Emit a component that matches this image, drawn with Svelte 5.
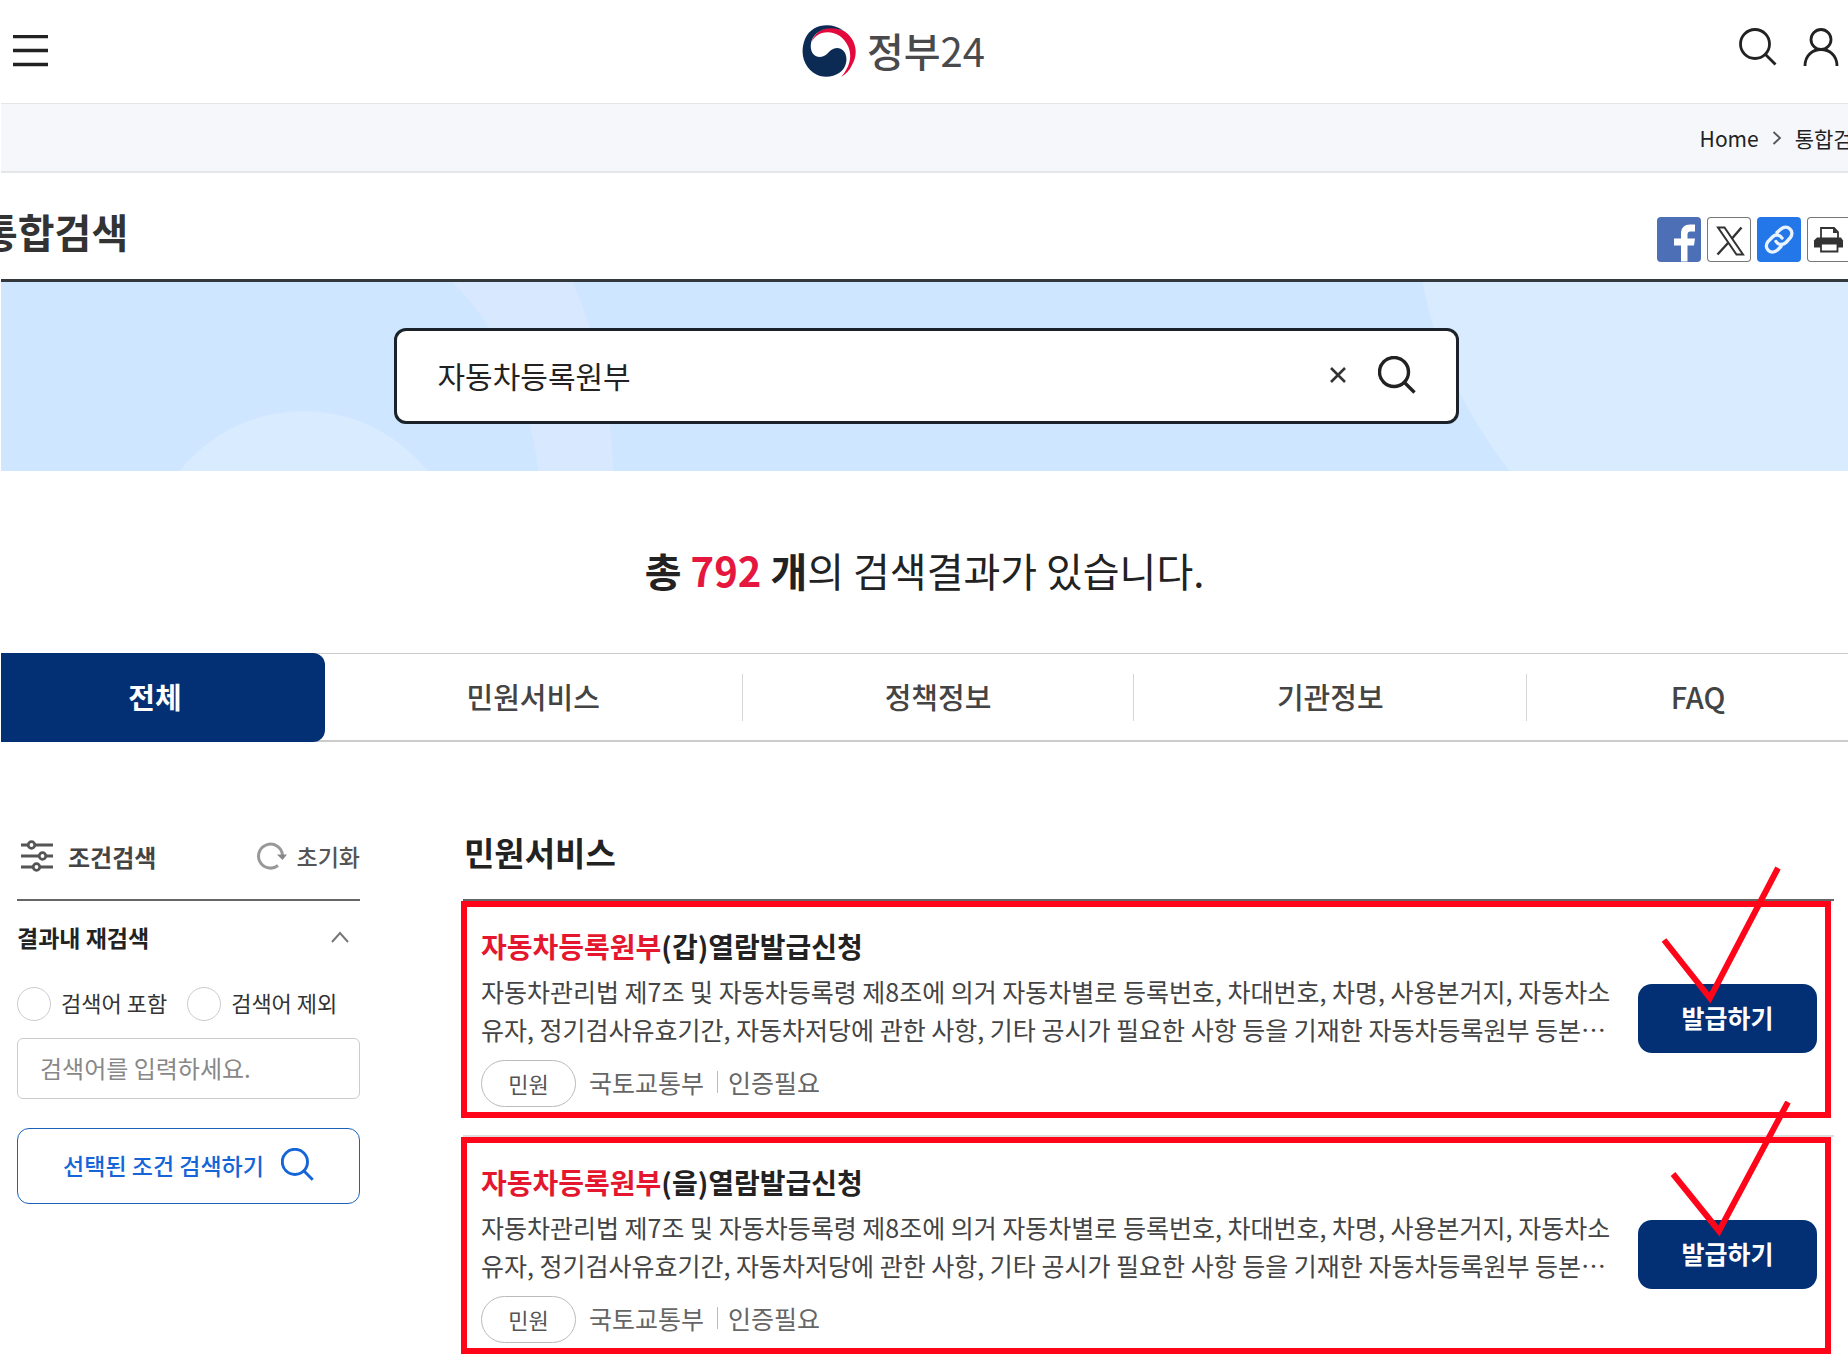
<script>
	let keyword = $state("자동차등록원부");
	let within = $state("");
	let mode = $state("");
	let open = $state(true);
	let current = $state("전체");

	const tabs = ["전체", "민원서비스", "정책정보", "기관정보", "FAQ"];

	const line1 = "자동차관리법 제7조 및 자동차등록령 제8조에 의거 자동차별로 등록번호, 차대번호, 차명, 사용본거지, 자동차소";
	const line2 = "유자, 정기검사유효기간, 자동차저당에 관한 사항, 기타 공시가 필요한 사항 등을 기재한 자동차등록원부 등본⋯";

	const items = [
		{ kind: "(갑)", check: "M13 75 L59 133 L127 3" },
		{ kind: "(을)", check: "M22 73 L68 130 L137 1" },
	];

	const reset = () => {
		mode = "";
		within = "";
	};
</script>

{#snippet searchIcon(width)}
	<svg viewBox="0 0 38 38" fill="none" stroke="currentColor" stroke-width={width} aria-hidden="true">
		<circle cx="16" cy="16" r="14.5" />
		<path d="M26.5 26.5 L36.5 36.5" />
	</svg>
{/snippet}

<div class="page">
	<header>
		<button class="icon menu" aria-label="전체메뉴">
			<svg viewBox="0 0 35 32" aria-hidden="true">
				<path d="M0 1.5h35M0 15.5h35M0 29.5h35" stroke="#222" stroke-width="3.4" />
			</svg>
		</button>
		<a class="logo" href="#home">
			<svg viewBox="0 0 54 54" aria-hidden="true">
				<path d="M9.5 17 C14 3 28 -1 42 6 C54 14 57 28 50 40 C48 45 44 49 39 52 C47 43 51 32 46 21 C41 10 30 5 20 8 C14 10 12 13 9.5 17Z" fill="#e4093c" />
				<path d="M42 6 C30 -3 10 -2 3 14 C-4 32 5 47 18 51 C30 54 42 48 44 38 C46 29 41 23 35 23 C27 23 26 32 18 32 C11 32 7 25 9.5 16 C14 4 28 0 42 6Z" fill="#0b2b55" />
			</svg>
			<span>정부<span class="num">24</span></span>
		</a>
		<div class="tools">
			<button class="icon" aria-label="검색">{@render searchIcon(2.8)}</button>
			<button class="icon user" aria-label="로그인">
				<svg viewBox="0 0 36 38" fill="none" stroke="#222" stroke-width="2.8" aria-hidden="true">
					<circle cx="18" cy="11.5" r="10" />
					<path d="M2 38 C2 16 34 16 34 38" />
				</svg>
			</button>
		</div>
	</header>

	<nav class="crumbs" aria-label="현재 위치">
		<a href="#home">Home</a>
		<svg viewBox="0 0 10 16" aria-hidden="true"><path d="M1.5 2 L8 8 L1.5 14" fill="none" stroke="#555" stroke-width="1.8" /></svg>
		<a href="#search">통합검색</a>
	</nav>

	<div class="titlebar">
		<h1>통합검색</h1>
		<div class="share">
			<button class="fb" aria-label="페이스북">
				<svg viewBox="0 0 44 44" aria-hidden="true">
					<path d="M24 44 V28 H17 V21 H24 V16 C24 10 28 7 33 7 H38 V14 H34 C31 14 30.5 15.5 30.5 18 V21 H38 L37 28 H30.5 V44Z" fill="#fff" />
				</svg>
			</button>
			<button class="outline" aria-label="X">
				<svg viewBox="0 0 44 44" fill="none" stroke="#333" aria-hidden="true">
					<path d="M11 10 H17.5 L36 37 H29.5Z" stroke-width="2" />
					<path d="M34.5 10 L25 21 M21 25.5 L10.5 37" stroke-width="2.4" />
				</svg>
			</button>
			<button class="link" aria-label="링크 복사">
				<svg viewBox="0 0 44 44" fill="none" stroke="#e8f3ff" stroke-width="3.4" stroke-linecap="round" aria-hidden="true">
					<path d="M20 15 L24 11.5 C30 6.5 38 13 33.5 20 L29 25 C26 28 21 27.5 19 24" />
					<path d="M24 29 L20.5 32.5 C14 38 6 31 11 24 L15.5 19.5 C18.5 16.5 23 17 25 20.5" />
				</svg>
			</button>
			<button class="outline" aria-label="인쇄">
				<svg viewBox="0 0 44 44" aria-hidden="true">
					<path d="M14 21 V10.5 H27 L31 14.5 V21" fill="#fff" stroke="#333" stroke-width="1.8" />
					<path d="M26 10 V15.5 H31Z" fill="#333" />
					<path d="M10 20 H34 L36 23 V30 H7 V23Z" fill="#333" />
					<path d="M14 26 H30.5 V34 H14Z" fill="#fff" stroke="#333" stroke-width="1.8" />
				</svg>
			</button>
		</div>
	</div>

	<form class="hero" onsubmit={(e) => e.preventDefault()}>
		<svg class="shapes" viewBox="0 0 1848 189" preserveAspectRatio="xMidYMid slice" aria-hidden="true">
			<path d="M452 0 Q522 70 538 189 H613 Q608 80 572 0Z" fill="#d8e9ff" />
			<circle cx="303" cy="287" r="158" fill="#d9ecff" />
			<path d="M1422 0 Q1440 100 1509 189 H1848 V0Z" fill="#d9ebfe" />
		</svg>
		<div class="searchbox">
			<input type="text" aria-label="검색어" bind:value={keyword} />
			<button type="button" class="icon clear" aria-label="지우기" onclick={() => (keyword = "")}>
				<svg viewBox="0 0 18 18" aria-hidden="true"><path d="M2 2 L16 16 M16 2 L2 16" stroke="#333" stroke-width="2.6" /></svg>
			</button>
			<button class="icon" aria-label="검색">{@render searchIcon(3.4)}</button>
		</div>
	</form>

	<p class="count"><b>총 <em>792</em> 개</b>의 검색결과가 있습니다.</p>

	<div class="tabs" role="tablist">
		{#each tabs as tab}
			<button role="tab" aria-selected={tab === current} class:active={tab === current} onclick={() => (current = tab)}>
				<span>{tab}</span>
			</button>
		{/each}
	</div>

	<div class="content">
		<aside>
			<div class="side-head">
				<svg class="filter" viewBox="0 0 32 32" fill="none" stroke="#555" stroke-width="2.8" aria-hidden="true">
					<path d="M0 5h7M14 5h18M0 16h18M25 16h7M0 27h12M19 27h13" />
					<circle cx="10.5" cy="5" r="3.3" />
					<circle cx="21.5" cy="16" r="3.3" />
					<circle cx="15.5" cy="27" r="3.3" />
				</svg>
				<h2>조건검색</h2>
				<button class="reset" onclick={reset}>
					<svg viewBox="0 0 30 30" aria-hidden="true">
						<path d="M25.5 14 A12 12 0 1 0 21 24.5" fill="none" stroke="#999" stroke-width="3" />
						<path d="M20 13.5 H30 L25.5 19Z" fill="#888" />
					</svg>
					초기화
				</button>
			</div>

			<button class="fold" aria-expanded={open} onclick={() => (open = !open)}>
				결과내 재검색
				<svg viewBox="0 0 20 12" aria-hidden="true"><path d="M2 11 L10 2 L18 11" fill="none" stroke="#777" stroke-width="2" /></svg>
			</button>

			{#if open}
				<div class="radios">
					<label><input type="radio" name="mode" value="in" bind:group={mode} /><span>검색어 포함</span></label>
					<label><input type="radio" name="mode" value="out" bind:group={mode} /><span>검색어 제외</span></label>
				</div>
				<input class="within" type="text" aria-label="결과내 검색어" placeholder="검색어를 입력하세요." bind:value={within} />
			{/if}

			<button class="apply">선택된 조건 검색하기 {@render searchIcon(3.4)}</button>
		</aside>

		<main>
			<h2>민원서비스</h2>
			<ul>
				{#each items as item}
					<li>
						<article>
							<div class="text">
								<h3><a href="#detail"><mark>자동차등록원부</mark>{item.kind}열람발급신청</a></h3>
								<p class="desc">{line1}<br />{line2}</p>
								<div class="meta">
									<span class="badge">민원</span>
									<span class="dept">국토교통부</span>
									<span class="auth">인증필요</span>
								</div>
							</div>
							<button class="issue">발급하기</button>
							<svg class="check" viewBox="0 0 140 140" aria-hidden="true">
								<path d={item.check} fill="none" stroke="#ff0519" stroke-width="6" />
							</svg>
						</article>
					</li>
				{/each}
			</ul>
		</main>
	</div>
</div>

<style>
	:global(body) {
		margin: 0;
		background: #fff;
	}
	.page {
		font-family: "Noto Sans CJK KR", "Noto Sans", sans-serif;
		color: #222;
		overflow: hidden;
		padding: 0 0 5px 1px;
	}
	button, input {
		font: inherit;
		color: inherit;
		margin: 0;
	}
	button {
		padding: 0;
		border: 0;
		background: none;
		cursor: pointer;
		white-space: nowrap;
	}
	a {
		color: inherit;
		text-decoration: none;
	}
	svg {
		display: block;
		flex: none;
	}
	h1, h2, h3, p, ul {
		margin: 0;
		padding: 0;
	}

	header {
		display: flex;
		justify-content: space-between;
		align-items: center;
		height: 103px;
		padding: 0 9px 0 12px;
		border-bottom: 1px solid #e3e5e8;
	}
	.icon svg {
		width: 38px;
		height: 38px;
	}
	.menu {
		padding-bottom: 2px;
	}
	.menu svg {
		width: 35px;
		height: 32px;
	}
	.logo {
		display: flex;
		align-items: center;
		gap: 11px;
		font-size: 40px;
		line-height: 50px;
		font-weight: 500;
		color: #4a4a4c;
	}
	.logo svg {
		width: 54px;
		height: 54px;
	}
	.logo > span {
		padding-bottom: 4px;
	}
	.num {
		font-weight: 400;
	}
	.tools {
		display: flex;
		gap: 26px;
		padding-bottom: 9px;
	}
	.user svg {
		width: 36px;
	}

	.crumbs {
		display: flex;
		justify-content: flex-end;
		align-items: center;
		gap: 13px;
		height: 67px;
		margin-right: -24px;
		font-size: 21px;
		background: #f5f7fb;
		border-bottom: 2px solid #e4e6ea;
	}
	.crumbs svg {
		width: 10px;
		height: 16px;
	}

	.titlebar {
		display: flex;
		justify-content: space-between;
		align-items: flex-start;
		margin: 0 -3px 0 0;
		padding: 36px 0 17px;
		border-bottom: 3px solid #33383d;
	}
	h1 {
		margin-left: -20px;
		font-size: 40px;
		line-height: 44px;
		color: #333;
	}
	.share {
		display: flex;
		gap: 6px;
		padding-top: 8px;
	}
	.share button {
		width: 44px;
		height: 45px;
		border-radius: 4px;
		overflow: hidden;
	}
	.share svg {
		width: 44px;
		height: 45px;
	}
	.share .fb {
		background: #4c6fb5;
	}
	.share .link {
		background: #2377e8;
	}
	.share .outline {
		box-shadow: inset 0 0 0 1px #777;
	}

	.hero {
		position: relative;
		padding: 46px 22px 47px 25px;
		background: #cee6ff;
	}
	.shapes {
		position: absolute;
		inset: 0;
		width: 100%;
		height: 100%;
	}
	.searchbox {
		position: relative;
		display: flex;
		align-items: center;
		gap: 31px;
		box-sizing: border-box;
		max-width: 1065px;
		height: 96px;
		margin: 0 auto;
		padding: 0 40px 2px 41px;
		border: 3px solid #1b2229;
		border-radius: 12px;
		background: #fff;
	}
	.searchbox input {
		flex: 1;
		min-width: 0;
		padding: 0;
		border: 0;
		outline: none;
		background: none;
		font-size: 30px;
		line-height: 44px;
	}
	.clear svg {
		width: 18px;
		height: 18px;
	}

	.count {
		margin: 69px 0 53px;
		font-size: 40px;
		line-height: 60px;
		text-align: center;
	}
	.count em {
		font-style: normal;
		color: #e5173f;
	}

	.tabs {
		display: grid;
		grid-template-columns: 324fr 418fr 392fr 393fr 342fr;
		height: 86px;
		margin-right: -21px;
		border-top: 1px solid #ccc;
		border-bottom: 2px solid #ccc;
	}
	.tabs button {
		display: flex;
		align-items: center;
		justify-content: center;
		font-size: 29px;
		font-weight: 500;
		color: #444;
	}
	.tabs span {
		flex: 1;
		padding-bottom: 3px;
		line-height: 44px;
	}
	.tabs button:not(:last-child) span {
		border-right: 1px solid #d5d5d5;
	}
	.tabs .active {
		margin: -1px 0 -2px;
		padding-right: 16px;
		border-radius: 0 12px 12px 0;
		background: #032f74;
		color: #fff;
		font-weight: 700;
	}
	.tabs .active:not(:last-child) span {
		border-right: 0;
	}

	.content {
		display: flex;
		gap: 103px;
		margin-top: 80px;
		padding: 0 14px 0 16px;
	}
	aside {
		flex: none;
		width: 343px;
	}
	.side-head {
		display: flex;
		align-items: center;
		box-sizing: border-box;
		height: 79px;
		padding: 0 0 9px 4px;
		border-bottom: 2px solid #666;
	}
	.filter {
		width: 32px;
		height: 32px;
		margin-right: 15px;
	}
	.side-head h2 {
		font-size: 24px;
		color: #444;
	}
	.reset {
		display: flex;
		align-items: center;
		gap: 10px;
		margin-left: auto;
		font-size: 23px;
		font-weight: 500;
		color: #555;
	}
	.reset svg {
		width: 30px;
		height: 30px;
	}
	.fold {
		display: flex;
		justify-content: space-between;
		align-items: center;
		width: 100%;
		height: 34px;
		margin-top: 19px;
		padding-right: 10px;
		font-size: 23px;
		font-weight: 700;
	}
	.fold svg {
		width: 20px;
		height: 12px;
	}
	.radios {
		display: flex;
		gap: 20px;
		margin: 32px 0 17px;
	}
	.radios label {
		display: flex;
		align-items: center;
		gap: 10px;
		height: 35px;
		font-size: 22px;
		white-space: nowrap;
		color: #333;
	}
	.radios span {
		padding-bottom: 3px;
	}
	.radios input {
		appearance: none;
		width: 34px;
		height: 34px;
		border: 1px solid #ccc;
		border-radius: 50%;
	}
	.radios input:checked {
		border: 10px solid #032f74;
	}
	.within {
		box-sizing: border-box;
		width: 100%;
		height: 61px;
		padding: 0 22px 2px;
		border: 1px solid #ccc;
		border-radius: 6px;
		font-size: 24px;
	}
	.within::placeholder {
		color: #888;
		opacity: 1;
	}
	.apply {
		display: flex;
		align-items: center;
		justify-content: center;
		gap: 17px;
		box-sizing: border-box;
		width: 100%;
		height: 76px;
		margin-top: 29px;
		padding-bottom: 3px;
		border: 1px solid #1a63b8;
		border-radius: 12px;
		font-size: 23px;
		font-weight: 500;
		color: #1565d8;
	}
	.apply svg {
		width: 33px;
		height: 33px;
	}

	main {
		flex: 1;
		min-width: 0;
	}
	main h2 {
		display: flex;
		align-items: center;
		box-sizing: border-box;
		height: 79px;
		padding: 0 0 18px 1px;
		border-bottom: 2px solid #666;
		font-size: 33px;
	}
	ul {
		list-style: none;
	}
	li + li {
		margin-top: 17px;
		border-top: 2px solid #ddd;
	}
	article {
		position: relative;
		display: flex;
		justify-content: space-between;
		align-items: center;
		margin: 0 3px 0 -2px;
		padding: 19px 8px 5px 14px;
		border: 6px solid #ff0519;
	}
	h3 {
		font-size: 28px;
		line-height: 40px;
	}
	mark {
		background: none;
		color: #e5172f;
	}
	.desc {
		margin: 6px 0 12px;
		font-size: 25px;
		line-height: 38px;
		white-space: nowrap;
		color: #444;
	}
	.meta {
		display: flex;
		align-items: center;
		font-size: 25px;
		color: #666;
	}
	.dept, .auth {
		margin-bottom: 3px;
	}
	.badge {
		display: flex;
		align-items: center;
		justify-content: center;
		box-sizing: border-box;
		width: 95px;
		height: 47px;
		margin-right: 13px;
		padding-bottom: 2px;
		border: 1px solid #bbb;
		border-radius: 24px;
		font-size: 22px;
		color: #555;
	}
	.auth {
		margin-left: 13px;
		padding-left: 10px;
		border-left: 1px solid #bbb;
		line-height: 22px;
	}
	.issue {
		flex: none;
		width: 179px;
		height: 69px;
		margin-top: 4px;
		padding-bottom: 3px;
		border-radius: 14px;
		background: #032f74;
		color: #fff;
		font-size: 25px;
		font-weight: 700;
	}
	/* hand-drawn tick, reaches above the frame */
	.check {
		position: absolute;
		top: -42px;
		right: 34px;
		width: 140px;
		height: 140px;
		pointer-events: none;
	}
</style>
